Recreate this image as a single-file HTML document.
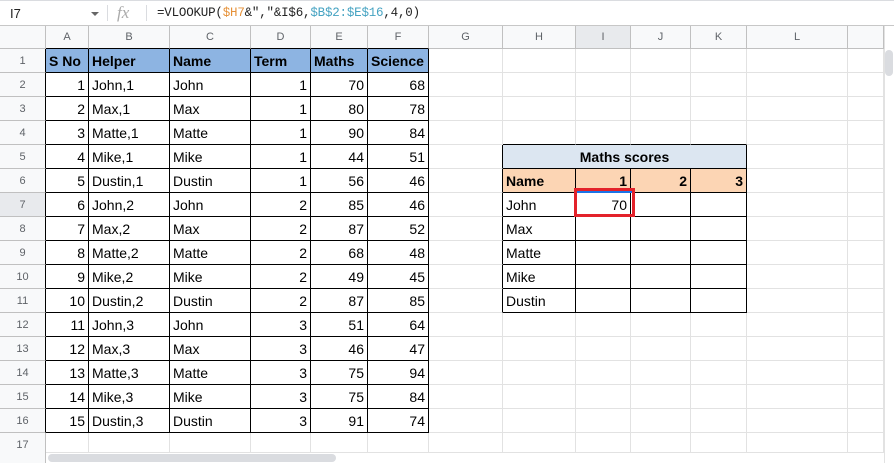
<!DOCTYPE html>
<html><head><meta charset="utf-8"><style>
*{box-sizing:border-box;margin:0;padding:0}
body{width:894px;height:463px;overflow:hidden;background:#fff;font-family:"Liberation Sans",Arial,sans-serif;position:relative}
.fb{position:absolute;left:0;top:0;width:894px;height:26px;border-top:1px solid #dadce0;border-bottom:1px solid #c7c7c7;background:#fff}
.nb{position:absolute;left:10px;top:5px;font-size:13px;color:#222}
.dd{position:absolute;left:91px;top:11px;width:0;height:0;border-left:4px solid transparent;border-right:4px solid transparent;border-top:4px solid #666}
.sep{position:absolute;top:4px;width:1px;height:16px;background:#dadce0}
.fx{position:absolute;left:117px;top:2px;font-family:"Liberation Serif",serif;font-style:italic;font-size:17px;color:#aaa}
.fm{position:absolute;left:157px;top:5px;font-family:"Liberation Mono",monospace;font-size:12.5px;color:#222;letter-spacing:-0.2px}
table{position:absolute;left:0;top:26px;border-collapse:separate;border-spacing:0;table-layout:fixed;width:884px}
td{border-right:1px solid #e2e2e2;border-bottom:1px solid #e2e2e2;height:24px;font-size:14px;color:#000;padding:0 3px;white-space:nowrap;overflow:hidden}
tr.h td{height:23px;background:#f8f9fa;color:#5f6368;font-size:11px;text-align:center;border-right:1px solid #c0c0c0;border-bottom:1px solid #c0c0c0}
td.rh{background:#f8f9fa;color:#5f6368;font-size:11px;text-align:center;border-right:1px solid #c0c0c0;border-bottom:1px solid #c0c0c0}
td.rb{border-right:1px solid #000}
td.b{border-right:1px solid #000;border-bottom:1px solid #000}
td.bb{border-bottom:1px solid #000!important}
td.br{border-right:1px solid #000}
.r{text-align:right}
.hd{background:#8db4e2;font-weight:bold}
.or{background:#fcd5b4;font-weight:bold}
.lb{background:#dce6f1;font-weight:bold;text-align:center}
.red{position:absolute;left:574px;top:188px;width:61px;height:29px;border:3px solid #e3222a}
.sel{position:absolute;left:577px;top:191px;width:55px;height:2px;background:#1a73e8}
.hs{position:absolute;left:48px;top:454px;width:288px;height:8px;border-radius:4px;background:#dadce0}
.vs{position:absolute;left:885px;top:50px;width:8px;height:26px;border-radius:4px;background:#dadce0}
.vline{position:absolute;left:884px;top:26px;width:10px;height:437px;background:#fff;border-left:1px solid #e2e2e2}
</style></head><body>
<div class="fb"><div class="nb">I7</div><div class="dd"></div><div class="sep" style="left:107px"></div><div class="fx">fx</div><div class="sep" style="left:146px"></div>
<div class="fm">=VLOOKUP(<span style="color:#e69138">$H7</span>&amp;","&amp;I$6,<span style="color:#46a3c2">$B$2:$E$16</span>,4,0)</div></div>
<table>
<colgroup><col style="width:46px"><col style="width:43px"><col style="width:81px"><col style="width:81px"><col style="width:60px"><col style="width:57px"><col style="width:61px"><col style="width:74px"><col style="width:73px"><col style="width:55px"><col style="width:60px"><col style="width:56px"><col style="width:101px"><col style="width:36px"></colgroup>
<tr class="h"><td></td><td class="bb">A</td><td class="bb">B</td><td class="bb">C</td><td class="bb">D</td><td class="bb">E</td><td class="bb">F</td><td>G</td><td>H</td><td style="background:#e8eaed">I</td><td>J</td><td>K</td><td>L</td><td></td></tr>
<tr><td class="rh rb">1</td><td class="b hd">S No</td><td class="b hd">Helper</td><td class="b hd">Name</td><td class="b hd">Term</td><td class="b hd">Maths</td><td class="b hd">Science</td><td></td><td></td><td></td><td></td><td></td><td></td><td></td></tr>
<tr><td class="rh rb">2</td><td class="b r">1</td><td class="b">John,1</td><td class="b">John</td><td class="b r">1</td><td class="b r">70</td><td class="b r">68</td><td></td><td></td><td></td><td></td><td></td><td></td><td></td></tr>
<tr><td class="rh rb">3</td><td class="b r">2</td><td class="b">Max,1</td><td class="b">Max</td><td class="b r">1</td><td class="b r">80</td><td class="b r">78</td><td></td><td></td><td></td><td></td><td></td><td></td><td></td></tr>
<tr><td class="rh rb">4</td><td class="b r">3</td><td class="b">Matte,1</td><td class="b">Matte</td><td class="b r">1</td><td class="b r">90</td><td class="b r">84</td><td></td><td class="bb"></td><td class="bb"></td><td class="bb"></td><td class="bb"></td><td></td><td></td></tr>
<tr><td class="rh rb">5</td><td class="b r">4</td><td class="b">Mike,1</td><td class="b">Mike</td><td class="b r">1</td><td class="b r">44</td><td class="b r">51</td><td class="br"></td><td colspan="4" class="b lb">Maths scores</td><td></td><td></td></tr>
<tr><td class="rh rb">6</td><td class="b r">5</td><td class="b">Dustin,1</td><td class="b">Dustin</td><td class="b r">1</td><td class="b r">56</td><td class="b r">46</td><td class="br"></td><td class="b or">Name</td><td class="b or r">1</td><td class="b or r">2</td><td class="b or r">3</td><td></td><td></td></tr>
<tr><td class="rh rb" style="background:#e8eaed">7</td><td class="b r">6</td><td class="b">John,2</td><td class="b">John</td><td class="b r">2</td><td class="b r">85</td><td class="b r">46</td><td class="br"></td><td class="b">John</td><td class="b r">70</td><td class="b"></td><td class="b"></td><td></td><td></td></tr>
<tr><td class="rh rb">8</td><td class="b r">7</td><td class="b">Max,2</td><td class="b">Max</td><td class="b r">2</td><td class="b r">87</td><td class="b r">52</td><td class="br"></td><td class="b">Max</td><td class="b"></td><td class="b"></td><td class="b"></td><td></td><td></td></tr>
<tr><td class="rh rb">9</td><td class="b r">8</td><td class="b">Matte,2</td><td class="b">Matte</td><td class="b r">2</td><td class="b r">68</td><td class="b r">48</td><td class="br"></td><td class="b">Matte</td><td class="b"></td><td class="b"></td><td class="b"></td><td></td><td></td></tr>
<tr><td class="rh rb">10</td><td class="b r">9</td><td class="b">Mike,2</td><td class="b">Mike</td><td class="b r">2</td><td class="b r">49</td><td class="b r">45</td><td class="br"></td><td class="b">Mike</td><td class="b"></td><td class="b"></td><td class="b"></td><td></td><td></td></tr>
<tr><td class="rh rb">11</td><td class="b r">10</td><td class="b">Dustin,2</td><td class="b">Dustin</td><td class="b r">2</td><td class="b r">87</td><td class="b r">85</td><td class="br"></td><td class="b">Dustin</td><td class="b"></td><td class="b"></td><td class="b"></td><td></td><td></td></tr>
<tr><td class="rh rb">12</td><td class="b r">11</td><td class="b">John,3</td><td class="b">John</td><td class="b r">3</td><td class="b r">51</td><td class="b r">64</td><td></td><td></td><td></td><td></td><td></td><td></td><td></td></tr>
<tr><td class="rh rb">13</td><td class="b r">12</td><td class="b">Max,3</td><td class="b">Max</td><td class="b r">3</td><td class="b r">46</td><td class="b r">47</td><td></td><td></td><td></td><td></td><td></td><td></td><td></td></tr>
<tr><td class="rh rb">14</td><td class="b r">13</td><td class="b">Matte,3</td><td class="b">Matte</td><td class="b r">3</td><td class="b r">75</td><td class="b r">94</td><td></td><td></td><td></td><td></td><td></td><td></td><td></td></tr>
<tr><td class="rh rb">15</td><td class="b r">14</td><td class="b">Mike,3</td><td class="b">Mike</td><td class="b r">3</td><td class="b r">75</td><td class="b r">84</td><td></td><td></td><td></td><td></td><td></td><td></td><td></td></tr>
<tr><td class="rh rb">16</td><td class="b r">15</td><td class="b">Dustin,3</td><td class="b">Dustin</td><td class="b r">3</td><td class="b r">91</td><td class="b r">74</td><td></td><td></td><td></td><td></td><td></td><td></td><td></td></tr>
<tr><td class="rh" style="height:20px">17</td><td style="height:20px"></td><td></td><td></td><td></td><td></td><td></td><td></td><td></td><td></td><td></td><td></td><td></td><td></td></tr>
</table>
<div class="red"></div><div class="sel"></div>
<div class="vline"></div><div class="vs"></div>
<div style="position:absolute;left:0;top:452px;width:884px;height:11px;background:#fff;border-top:1px solid #e2e2e2"></div>
<div style="position:absolute;left:0;top:452px;width:46px;height:11px;background:#f8f9fa;border-right:1px solid #c0c0c0"></div>
<div class="hs"></div>
</body></html>
